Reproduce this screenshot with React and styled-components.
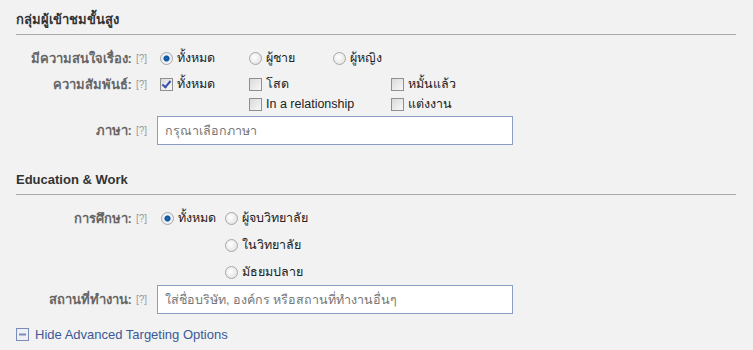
import React from "react";
import styled, { createGlobalStyle } from "styled-components";

const GlobalStyle = createGlobalStyle`
  body {
    margin: 0;
    background: #f2f2f2;
    font-family: Tahoma, "Liberation Sans", "Noto Sans", sans-serif;
    font-size: 11px;
    color: #333;
  }
`;

const App = () => {
  return (
    <Page>
      <GlobalStyle />
      <Header>กลุ่มผู้เข้าชมขั้นสูง</Header>

      <Row $top={13}>
        <Label>
          มีความสนใจเรื่อง: <Help>[?]</Help>
        </Label>
        <Controls>
          <Option $w={89}>
            <Radio $checked /> ทั้งหมด
          </Option>
          <Option $w={84}>
            <Radio /> ผู้ชาย
          </Option>
          <Option>
            <Radio /> ผู้หญิง
          </Option>
        </Controls>
      </Row>

      <Row $top={6}>
        <Label>
          ความสัมพันธ์: <Help>[?]</Help>
        </Label>
        <Controls>
          <Option $w={89}>
            <Check $checked /> ทั้งหมด
          </Option>
          <Stack $w={142}>
            <Option>
              <Check /> โสด
            </Option>
            <Option>
              <Check /> In a relationship
            </Option>
          </Stack>
          <Stack>
            <Option>
              <Check /> หมั้นแล้ว
            </Option>
            <Option>
              <Check /> แต่งงาน
            </Option>
          </Stack>
        </Controls>
      </Row>

      <Row $top={2}>
        <Label $tall>
          ภาษา: <Help>[?]</Help>
        </Label>
        <InputCell>
          <TextBox placeholder="กรุณาเลือกภาษา" />
        </InputCell>
      </Row>

      <Header $top={27} $pad={0}>
        Education &amp; Work
      </Header>

      <Row $top={13}>
        <Label>
          การศึกษา: <Help>[?]</Help>
        </Label>
        <Controls $left={14}>
          <Option $w={64}>
            <Radio $checked /> ทั้งหมด
          </Option>
          <Stack $gap={7}>
            <Option>
              <Radio /> ผู้จบวิทยาลัย
            </Option>
            <Option>
              <Radio /> ในวิทยาลัย
            </Option>
            <Option>
              <Radio /> มัธยมปลาย
            </Option>
          </Stack>
        </Controls>
      </Row>

      <Row $top={3}>
        <Label $tall>
          สถานที่ทำงาน: <Help>[?]</Help>
        </Label>
        <InputCell>
          <TextBox placeholder="ใส่ชื่อบริษัท, องค์กร หรือสถานที่ทำงานอื่นๆ" />
        </InputCell>
      </Row>

      <HideLink href="#">
        <svg width="13" height="13" viewBox="0 0 13 13">
          <rect x="0.5" y="0.5" width="12" height="12" fill="#eef0f6" stroke="#7b8cb8" />
          <rect x="3" y="5.5" width="7" height="2" fill="#7b8cb8" />
        </svg>
        Hide Advanced Targeting Options
      </HideLink>
    </Page>
  );
};
export default App;

const Page = styled.div`
  width: 720px;
  padding: 0 17px 0 16px;
`;
const Header = styled.div`
  margin-top: ${(p) => p.$top || 0}px;
  padding-top: ${(p) => (p.$pad === undefined ? 12 : p.$pad)}px;
  padding-bottom: 6px;
  line-height: 16px;
  font-size: 13px;
  font-weight: bold;
  color: #333;
  border-bottom: 1px solid #aaa;
`;
const Row = styled.div`
  display: grid;
  grid-template-columns: 131px 1fr;
  margin-top: ${(p) => p.$top || 0}px;
`;
const Label = styled.div`
  height: ${(p) => (p.$tall ? 29 : 20)}px;
  display: flex;
  align-items: center;
  justify-content: flex-end;
  white-space: nowrap;
  font-weight: bold;
  font-size: 13px;
  color: #666;
  gap: 4px;
  align-self: start;
`;
const Help = styled.span`
  font-weight: normal;
  font-size: 10px;
  color: #999;
`;
const Controls = styled.div`
  display: flex;
  padding-left: ${(p) => p.$left || 13}px;
`;
const Stack = styled.div`
  display: flex;
  flex-direction: column;
  gap: ${(p) => p.$gap || 0}px;
  width: ${(p) => (p.$w ? `${p.$w}px` : "auto")};
`;
const Option = styled.label`
  display: flex;
  align-items: center;
  gap: 4px;
  height: 20px;
  white-space: nowrap;
  font-size: 12.5px;
  color: #222;
  width: ${(p) => (p.$w ? `${p.$w}px` : "auto")};
  flex-shrink: 0;
`;
const Radio = styled.span`
  width: 11px;
  height: 11px;
  border-radius: 50%;
  border: 1px solid #a8a8a8;
  background: ${(p) =>
    p.$checked
      ? "radial-gradient(circle, #1d6fc0 0, #0d4f96 2.5px, #e8eef4 3.5px, #f4f4f4 100%)"
      : "radial-gradient(circle at 40% 40%, #ffffff, #dcdcdc)"};
  flex-shrink: 0;
`;
const Check = styled.span`
  position: relative;
  width: 11px;
  height: 11px;
  border: 1px solid #8f8f8f;
  background: linear-gradient(135deg, #dadada, #f8f8f8);
  flex-shrink: 0;
  &::after {
    content: "";
    display: ${(p) => (p.$checked ? "block" : "none")};
    position: absolute;
    left: 3px;
    top: 0px;
    width: 3px;
    height: 7px;
    border: solid #3a4fa8;
    border-width: 0 2px 2px 0;
    transform: rotate(40deg);
  }
`;
const InputCell = styled.div`
  padding-left: 10px;
`;
const TextBox = styled.input`
  box-sizing: border-box;
  width: 356px;
  height: 29px;
  border: 1px solid #8b9dc3;
  background: #fff;
  padding: 0 7px;
  font-family: inherit;
  font-size: 12.5px;
  outline: none;
  &::placeholder {
    color: #777;
  }
`;
const HideLink = styled.a`
  display: flex;
  align-items: center;
  gap: 6px;
  margin-top: 12px;
  height: 16px;
  font-size: 13px;
  color: #3b5998;
  text-decoration: none;
`;
